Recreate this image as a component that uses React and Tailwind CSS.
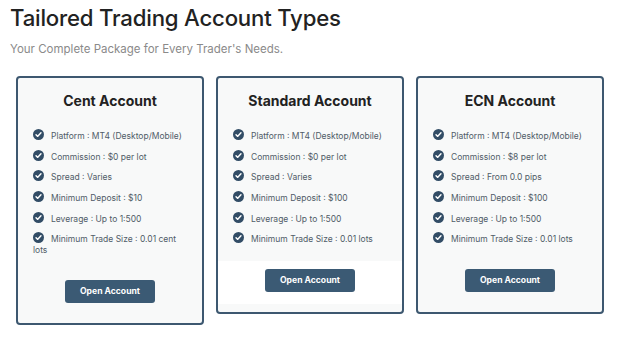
import React from 'react';

const accounts = [
  {
    name: 'Cent Account',
    items: [
      'Platform : MT4 (Desktop/Mobile)',
      'Commission : $0 per lot',
      'Spread : Varies',
      'Minimum Deposit : $10',
      'Leverage : Up to 1:500',
      'Minimum Trade Size : 0.01 cent lots',
    ],
  },
  {
    name: 'Standard Account',
    items: [
      'Platform : MT4 (Desktop/Mobile)',
      'Commission : $0 per lot',
      'Spread : Varies',
      'Minimum Deposit : $100',
      'Leverage : Up to 1:500',
      'Minimum Trade Size : 0.01 lots',
    ],
  },
  {
    name: 'ECN Account',
    items: [
      'Platform : MT4 (Desktop/Mobile)',
      'Commission : $8 per lot',
      'Spread : From 0.0 pips',
      'Minimum Deposit : $100',
      'Leverage : Up to 1:500',
      'Minimum Trade Size : 0.01 lots',
    ],
  },
];

function CheckIcon() {
  return (
    <svg width="11" height="11" viewBox="0 0 16 16" className="inline-block align-[-1px] mr-[7px]">
      <circle cx="8" cy="8" r="8" fill="#324d66" />
      <path d="M4.4 8.3 L6.9 10.7 L11.6 5.6" stroke="#fff" strokeWidth="2.1" fill="none" strokeLinecap="round" strokeLinejoin="round" />
    </svg>
  );
}

export default function App() {
  return (
    <div className="w-[624px] h-[341px] bg-white pl-[10px] pt-[3px]" style={{ fontFamily: 'Inter, "Open Sans", sans-serif' }}>
      <h1 className="text-[22.2px] font-medium text-[#222] leading-[30px] tracking-[-0.2px]">Tailored Trading Account Types</h1>
      <p className="text-[11.5px] text-[#8a8a8a] mt-[8px] leading-[16px]">Your Complete Package for Every Trader's Needs.</p>

      <div className="flex items-start gap-[12px] ml-[6px] mt-[19px]">
        {accounts.map((acc, i) => (
          <div key={acc.name} className="w-[188px] border-2 border-[#3d5870] rounded-[4px] bg-[#f8f9f9] pb-[8px]">
            <h2 className="text-center text-[14px] font-bold text-[#222] mt-[14px] leading-[18px]">{acc.name}</h2>
            <ul className="mt-[19px] pl-[15px] pr-[10px] pb-[8px]">
              {acc.items.map((it) => (
                <li key={it} className="text-[8.5px] text-[#505c68] leading-[11px] mb-[7.7px]">
                  <CheckIcon />
                  {it}
                </li>
              ))}
            </ul>
            <div className={`flex justify-center pt-[8px] pb-[12px] ${i === 1 ? 'bg-white' : ''}`}>
              <button className="w-[90px] h-[23px] rounded-[3px] bg-[#3b5a74] text-white text-[8.6px] font-bold">Open Account</button>
            </div>
          </div>
        ))}
      </div>
    </div>
  );
}
